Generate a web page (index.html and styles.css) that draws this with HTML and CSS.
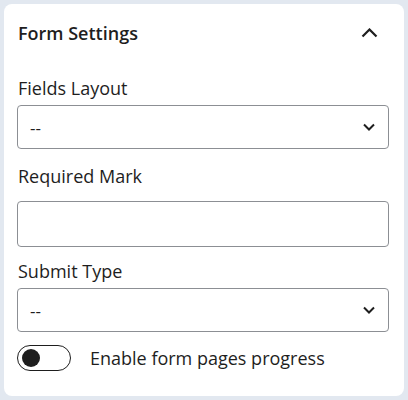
FILE: index.html
```html
<!DOCTYPE html>
<html lang="en">
<head>
<meta charset="utf-8">
<title>Form Settings</title>
<link rel="stylesheet" href="styles.css">
</head>
<body>
<div class="card">
  <div class="header">
    <h2 class="title">Form Settings</h2>
    <svg class="toggle-icon" width="17" height="10" viewBox="0 0 17 10"><polyline points="1.5,8.5 8.5,1.5 15.5,8.5" fill="none" stroke="#1e1e1e" stroke-width="2.2"/></svg>
  </div>
  <div class="field f1">
    <label class="label">Fields Layout</label>
    <div class="select"><span>--</span><svg width="12" height="8" viewBox="0 0 12 8"><polyline points="1,1.5 6,6.5 11,1.5" fill="none" stroke="#1e1e1e" stroke-width="2"/></svg></div>
  </div>
  <div class="field f2">
    <label class="label">Required Mark</label>
    <div class="input"></div>
  </div>
  <div class="field f3">
    <label class="label">Submit Type</label>
    <div class="select"><span>--</span><svg width="12" height="8" viewBox="0 0 12 8"><polyline points="1,1.5 6,6.5 11,1.5" fill="none" stroke="#1e1e1e" stroke-width="2"/></svg></div>
  </div>
  <div class="switch-row">
    <span class="switch"><span class="knob"></span></span>
    <span class="switch-label">Enable form pages progress</span>
  </div>
</div>
</body>
</html>
```
FILE: styles.css
```css
html, body {
  margin: 0;
  padding: 0;
}
body {
  background: #e2e8f0;
  font-family: "Open Sans", "Noto Sans", sans-serif;
  color: #1e1e1e;
  padding: 4px;
}
.card {
  box-sizing: border-box;
  width: 400px;
  height: 392px;
  background: #fff;
  border-radius: 8px;
  padding: 16px 15px 0 13px;
}
.header {
  display: flex;
  align-items: center;
  justify-content: space-between;
  height: 26px;
  padding-left: 1px;
  padding-right: 11px;
}
.title {
  margin: 0;
  font-size: 18px;
  font-weight: 600;
  line-height: 26px;
}
.toggle-icon {
  display: block;
}
.field {
  display: flex;
  flex-direction: column;
}
.f1 { margin-top: 30px; }
.f2 { margin-top: 15px; }
.f3 { margin-top: 12px; }
.label {
  font-size: 18px;
  line-height: 24px;
  padding-left: 1px;
}
.f1 .label, .f3 .label { margin-bottom: 5px; }
.f2 .label { margin-bottom: 13px; }
.select, .input {
  box-sizing: border-box;
  border: 1px solid #8c8f94;
  border-radius: 4px;
  height: 44px;
  background: #fff;
}
.input { height: 46px; }
.select {
  display: flex;
  align-items: center;
  justify-content: space-between;
  padding: 0 13px 0 12px;
  font-size: 17px;
}
.select svg { display: block; }
.switch-row {
  display: flex;
  align-items: center;
  gap: 19px;
  margin-top: 13px;
}
.switch {
  box-sizing: border-box;
  width: 54px;
  height: 26px;
  border: 1.5px solid #1e1e1e;
  border-radius: 13px;
  display: flex;
  align-items: center;
  padding-left: 3.5px;
}
.knob {
  width: 18px;
  height: 18px;
  border-radius: 50%;
  background: #1e1e1e;
}
.switch-label {
  font-size: 18px;
  line-height: 24px;
}
```
